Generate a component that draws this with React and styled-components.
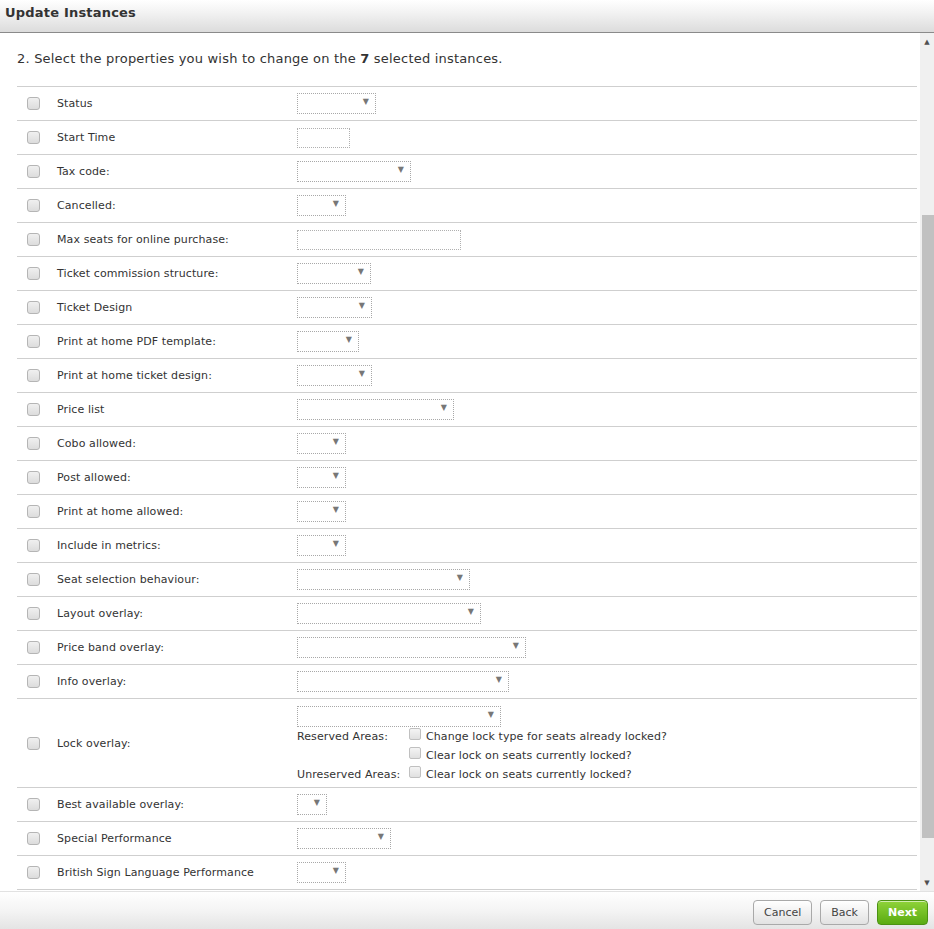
import React from 'react';
import styled, { createGlobalStyle } from 'styled-components';

const GlobalStyle = createGlobalStyle`
    html, body {
        margin: 0;
        padding: 0;
        background: #fff;
    }
    body {
        font-family: 'DejaVu Sans', Verdana, sans-serif;
        color: #333;
    }
`;

// 행 데이터: 라벨, 컨트롤 종류, 너비
const rows = [
    { label: 'Status', type: 'select', width: 79 },
    { label: 'Start Time', type: 'input', width: 53 },
    { label: 'Tax code:', type: 'select', width: 114 },
    { label: 'Cancelled:', type: 'select', width: 49 },
    { label: 'Max seats for online purchase:', type: 'input', width: 164 },
    { label: 'Ticket commission structure:', type: 'select', width: 74 },
    { label: 'Ticket Design', type: 'select', width: 75 },
    { label: 'Print at home PDF template:', type: 'select', width: 62 },
    { label: 'Print at home ticket design:', type: 'select', width: 75 },
    { label: 'Price list', type: 'select', width: 157 },
    { label: 'Cobo allowed:', type: 'select', width: 49 },
    { label: 'Post allowed:', type: 'select', width: 49 },
    { label: 'Print at home allowed:', type: 'select', width: 49 },
    { label: 'Include in metrics:', type: 'select', width: 49 },
    { label: 'Seat selection behaviour:', type: 'select', width: 173 },
    { label: 'Layout overlay:', type: 'select', width: 184 },
    { label: 'Price band overlay:', type: 'select', width: 229 },
    { label: 'Info overlay:', type: 'select', width: 212 },
    { label: 'Lock overlay:', type: 'lock', width: 204 },
    { label: 'Best available overlay:', type: 'select', width: 30 },
    { label: 'Special Performance', type: 'select', width: 94 },
    { label: 'British Sign Language Performance', type: 'select', width: 49 },
];

const UpdateInstances = () => {
    const renderControl = (row) => {
        if (row.type === 'input') {
            return <Field style={{ width: row.width }} />;
        }
        if (row.type === 'lock') {
            return (
                <LockBox>
                    <Select style={{ width: row.width }}>
                        <Arrow>▼</Arrow>
                    </Select>
                    <LockOptions>
                        <AreaLabel>Reserved Areas:</AreaLabel>
                        <Option>
                            <SmallCheck />
                            Change lock type for seats already locked?
                        </Option>
                        <AreaLabel />
                        <Option>
                            <SmallCheck />
                            Clear lock on seats currently locked?
                        </Option>
                        <AreaLabel>Unreserved Areas:</AreaLabel>
                        <Option>
                            <SmallCheck />
                            Clear lock on seats currently locked?
                        </Option>
                    </LockOptions>
                </LockBox>
            );
        }
        return (
            <Select style={{ width: row.width }}>
                <Arrow>▼</Arrow>
            </Select>
        );
    };

    return (
        <Dialog>
            <GlobalStyle />
            <Header>Update Instances</Header>
            <Body>
                <Content>
                    <Intro>
                        <span>
                            2. Select the properties you wish to change on the <b>7</b> selected instances.
                        </span>
                    </Intro>
                    <Table>
                        {rows.map((row) => (
                            <Row key={row.label} tall={row.type === 'lock'}>
                                <CheckCell>
                                    <Check />
                                </CheckCell>
                                <Label>{row.label}</Label>
                                <ControlCell>{renderControl(row)}</ControlCell>
                            </Row>
                        ))}
                    </Table>
                </Content>
                <Scrollbar>
                    <ScrollArrow>▲</ScrollArrow>
                    <Track>
                        <Thumb />
                    </Track>
                    <ScrollArrow>▼</ScrollArrow>
                </Scrollbar>
            </Body>
            <Footer>
                <Button>Cancel</Button>
                <Button>Back</Button>
                <Button primary>Next</Button>
            </Footer>
        </Dialog>
    );
};

const Dialog = styled.div`
    display: flex;
    flex-direction: column;
    width: 934px;
    height: 929px;
    overflow: hidden;
    background: #fff;
`;

const Header = styled.div`
    height: 33px;
    flex-shrink: 0;
    display: flex;
    align-items: center;
    padding-left: 5px;
    padding-bottom: 8px;
    box-sizing: border-box;
    font-family: 'DejaVu Sans', Verdana, sans-serif;
    font-weight: bold;
    font-size: 13px;
    letter-spacing: 0.2px;
    color: #333;
    background: linear-gradient(to bottom, #ffffff 0%, #f2f2f2 40%, #dcdcdc 100%);
    border-bottom: 1px solid #8a8a8a;
`;

const Body = styled.div`
    flex: 1;
    display: flex;
    min-height: 0;
`;

const Content = styled.div`
    flex: 1;
    padding: 0 3px 0 17px;
    overflow: hidden;
`;

const Intro = styled.div`
    height: 53px;
    display: flex;
    align-items: center;
    padding-bottom: 3px;
    box-sizing: border-box;
    font-size: 13px;
    letter-spacing: 0.2px;
    color: #333;
`;

const Table = styled.div`
    border-top: 1px solid #cfcfcf;
`;

const Row = styled.div`
    display: flex;
    align-items: center;
    height: ${(props) => (props.tall ? '88px' : '33px')};
    border-bottom: 1px solid #cfcfcf;
    font-size: 11px;
    letter-spacing: 0.1px;
`;

const CheckCell = styled.div`
    width: 40px;
    padding-left: 10px;
    box-sizing: border-box;
    display: flex;
    align-items: center;
`;

const Check = styled.span`
    display: inline-block;
    width: 11px;
    height: 11px;
    border: 1px solid #b5b5b5;
    border-radius: 3px;
    background: linear-gradient(to bottom, #f0f0f0, #dcdcdc);
`;

const Label = styled.div`
    width: 240px;
    color: #333;
`;

const ControlCell = styled.div`
    flex: 1;
    display: flex;
    align-items: center;
`;

const Select = styled.div`
    position: relative;
    height: 21px;
    box-sizing: border-box;
    border: 1px dotted #a8a8a8;
    background: #fff;
`;

const Arrow = styled.span`
    position: absolute;
    right: 6px;
    top: 3px;
    font-size: 8px;
    color: #777;
`;

const Field = styled.div`
    height: 20px;
    box-sizing: border-box;
    border: 1px dotted #b0b0b0;
    background: #fff;
`;

const LockBox = styled.div`
    display: flex;
    flex-direction: column;
    gap: 2px;
    padding-top: 2px;
`;

const LockOptions = styled.div`
    display: grid;
    grid-template-columns: 112px auto;
    row-gap: 4px;
    line-height: 15px;
`;

const AreaLabel = styled.span`
    color: #333;
`;

const Option = styled.span`
    display: flex;
    align-items: center;
    gap: 5px;
    color: #333;
`;

const SmallCheck = styled.span`
    display: inline-block;
    width: 10px;
    height: 10px;
    margin-top: -5px;
    border: 1px solid #c0c0c0;
    border-radius: 2px;
    background: linear-gradient(to bottom, #f4f4f4, #e0e0e0);
`;

const Scrollbar = styled.div`
    width: 14px;
    display: flex;
    flex-direction: column;
    background: #f0f0f0;
`;

const ScrollArrow = styled.div`
    height: 17px;
    display: flex;
    align-items: center;
    justify-content: center;
    font-size: 7px;
    color: #505050;
`;

const Track = styled.div`
    flex: 1;
    display: flex;
    flex-direction: column;
    padding-top: 165px;
    padding-bottom: 36px;
    padding-left: 2px;
`;

const Thumb = styled.div`
    flex: 1;
    background: #c1c1c1;
`;

const Footer = styled.div`
    height: 38px;
    flex-shrink: 0;
    display: flex;
    align-items: center;
    justify-content: flex-end;
    gap: 8px;
    padding-right: 6px;
    box-sizing: border-box;
    border-top: 1px solid #e2e2e2;
    background: linear-gradient(to bottom, #ffffff 0%, #f4f4f4 50%, #e4e4e4 100%);
`;

const Button = styled.button`
    height: 25px;
    padding: 0 10px;
    margin-top: 4px;
    font-family: 'DejaVu Sans', Verdana, sans-serif;
    font-size: 11px;
    font-weight: ${(props) => (props.primary ? 'bold' : 'normal')};
    color: ${(props) => (props.primary ? '#fff' : '#444')};
    border: 1px solid ${(props) => (props.primary ? '#4b9213' : '#a9a9a9')};
    border-radius: 4px;
    background: ${(props) =>
        props.primary
            ? 'linear-gradient(to bottom, #8fd33a, #5aab12)'
            : 'linear-gradient(to bottom, #ffffff, #e2e2e2)'};
    box-shadow: inset 0 1px 0 rgba(255, 255, 255, 0.6);
`;

export default UpdateInstances;
